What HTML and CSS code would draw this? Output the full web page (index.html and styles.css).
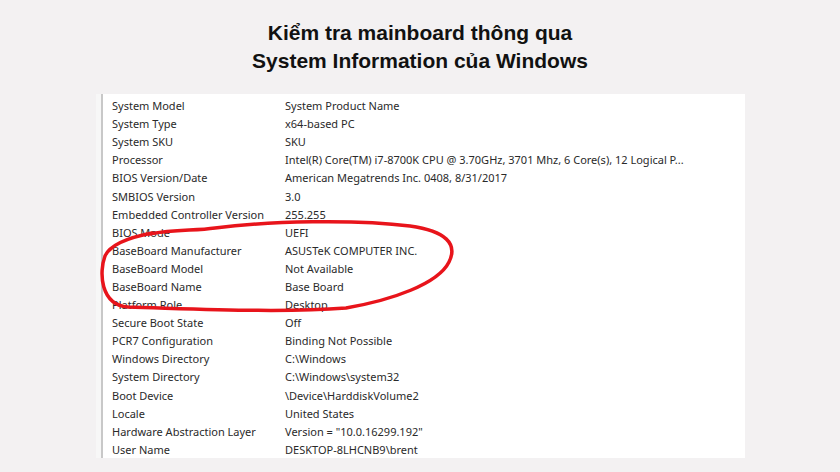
FILE: index.html
```html
<!DOCTYPE html>
<html lang="vi">
<head>
  <meta charset="UTF-8" />
  <meta name="viewport" content="width=device-width, initial-scale=1.0"/>
  <title>Kiểm tra mainboard</title>
  <link rel="stylesheet" href="styles.css">
</head>
<body>

  <h1 class="title">Kiểm tra mainboard thông qua<br>System Information của Windows</h1>

  <div class="sysinfo">
    <table class="summary">
      <tbody>
        <tr><td>System Model</td><td>System Product Name</td></tr>
        <tr><td>System Type</td><td>x64-based PC</td></tr>
        <tr><td>System SKU</td><td>SKU</td></tr>
        <tr><td>Processor</td><td>Intel(R) Core(TM) i7-8700K CPU @ 3.70GHz, 3701 Mhz, 6 Core(s), 12 Logical P...</td></tr>
        <tr><td>BIOS Version/Date</td><td>American Megatrends Inc. 0408, 8/31/2017</td></tr>
        <tr><td>SMBIOS Version</td><td>3.0</td></tr>
        <tr><td>Embedded Controller Version</td><td>255.255</td></tr>
        <tr><td>BIOS Mode</td><td>UEFI</td></tr>
        <tr><td>BaseBoard Manufacturer</td><td>ASUSTeK COMPUTER INC.</td></tr>
        <tr><td>BaseBoard Model</td><td>Not Available</td></tr>
        <tr><td>BaseBoard Name</td><td>Base Board</td></tr>
        <tr><td>Platform Role</td><td>Desktop</td></tr>
        <tr><td>Secure Boot State</td><td>Off</td></tr>
        <tr><td>PCR7 Configuration</td><td>Binding Not Possible</td></tr>
        <tr><td>Windows Directory</td><td>C:\Windows</td></tr>
        <tr><td>System Directory</td><td>C:\Windows\system32</td></tr>
        <tr><td>Boot Device</td><td>\Device\HarddiskVolume2</td></tr>
        <tr><td>Locale</td><td>United States</td></tr>
        <tr><td>Hardware Abstraction Layer</td><td>Version = "10.0.16299.192"</td></tr>
        <tr><td>User Name</td><td>DESKTOP-8LHCNB9\brent</td></tr>
      </tbody>
    </table>

    <!-- hand-drawn marker circling the baseboard rows -->
    <svg class="marker" width="840" height="472" viewBox="0 0 840 472">
      <path d="M150 234 C175 229 195 231 215 228 C270 221 355 219 410 226 C446 231 458 244 449 262 C438 284 392 300 346 308 C280 313 200 309 128 307 C100 305 99 272 105 256 C110 245 126 238 152 233"
            fill="none" stroke="#e8141b" stroke-width="3.5" stroke-linecap="round" stroke-linejoin="round"/>
    </svg>
  </div>

</body>
</html>
```

FILE: styles.css
```css
body {
  margin: 0;
  height: 472px;
  background: #f3f1f2;
  font-family: 'Liberation Sans', Arial, sans-serif;
  overflow: hidden;
}

.title {
  margin: 0;
  padding-top: 19px;
  text-align: center;
  font-size: 21px;
  line-height: 28px;
  font-weight: bold;
  color: #111;
}

.sysinfo {
  margin: 19px 0 0 96px;
  width: 649px;
  height: 364px;
  background: #fff;
  border-left: 5px solid #f7f7f7;
  box-sizing: border-box;
  overflow: hidden;
}

.summary {
  border-left: 2px solid #c8c8c8;
  border-collapse: collapse;
  font-family: 'Noto Sans', 'Open Sans', sans-serif;
  font-size: 11px;
  color: #2a2a2a;
}

.summary tbody::before {
  content: "";
  display: block;
  height: 3px;
}

.summary td {
  height: 18.1px;
  padding: 0;
  white-space: nowrap;
  line-height: 18px;
}

.summary td:first-child {
  width: 173px;
  padding-left: 9px;
}

.marker {
  position: absolute;
  top: 0;
  left: 0;
  pointer-events: none;
}
```
